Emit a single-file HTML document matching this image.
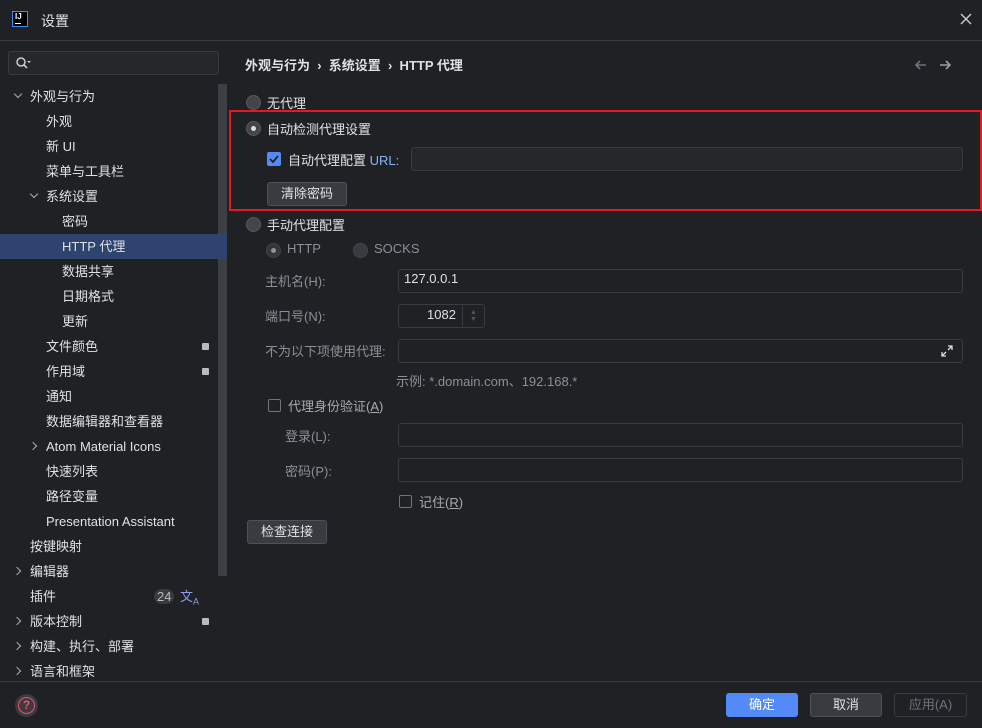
<!DOCTYPE html><html><head><meta charset="utf-8"><style>
*{margin:0;padding:0;box-sizing:border-box}
body{width:982px;height:728px;background:#1f2125;font-family:"Liberation Sans","Noto Sans CJK SC",sans-serif;font-size:13px;color:#dfe1e5;position:relative;overflow:hidden}
.a{position:absolute;white-space:nowrap}
.row{position:absolute;left:0;width:227px;height:25px;line-height:25px}
.sel{background:#2e436e}
.chev{position:absolute;width:6px;height:6px;border-right:1.5px solid #aaa;border-bottom:1.5px solid #aaa}
.radio{position:absolute;width:15px;height:15px;border-radius:50%;background:#43454a;border:1px solid #55585e}
.radio.on::after{content:"";position:absolute;left:4px;top:4px;width:5px;height:5px;border-radius:50%;background:#ddd}
.inp{position:absolute;border:1px solid #393b40;background:#1f2125;border-radius:3px}
.btn{position:absolute;border:1px solid #4e5157;background:#393b40;border-radius:3px;text-align:center;color:#dfe1e5}
.cb{position:absolute;width:13px;height:13px;border:1px solid #6f737a;border-radius:2px}
.dim{color:#8c8f95}
.bdg{position:absolute;width:7px;height:7px;background:#bbb;border-radius:1px}
</style></head><body>
<div class="a" style="left:0;top:40px;width:982px;height:1px;background:#393b40"></div>
<div class="a" style="left:12px;top:11px;width:16px;height:16px;background:#000;border:1px solid #3d8ef2;color:#fff;font-size:8px;font-weight:bold;line-height:10px;padding-left:2px">IJ<div style="width:6px;height:1px;background:#fff;margin-top:1px"></div></div>
<div class="a" style="left:41px;top:11px;font-size:14px">设置</div>
<svg class="a" style="left:960px;top:13px" width="12" height="12"><path d="M1 1l10 10M11 1L1 11" stroke="#ccc" stroke-width="1.4"/></svg>
<!-- search -->
<div class="a" style="left:8px;top:51px;width:211px;height:24px;border:1px solid #393b40;border-radius:3px;background:#25272b"></div>
<svg class="a" style="left:15px;top:56px" width="16" height="14"><circle cx="6" cy="6" r="4" fill="none" stroke="#ccc" stroke-width="1.5"/><path d="M9 9l3 3" stroke="#ccc" stroke-width="1.6"/><path d="M12 5h4l-2 2z" fill="#ccc"/></svg>
<!-- scrollbar -->
<div class="a" style="left:218px;top:84px;width:9px;height:492px;background:#3c3f44"></div>
<div class="row" style="top:84px"><span class="chev" style="left:15px;top:7px;transform:rotate(45deg)"></span><span class="a" style="left:30px">外观与行为</span></div>
<div class="row" style="top:109px"><span class="a" style="left:46px">外观</span></div>
<div class="row" style="top:134px"><span class="a" style="left:46px">新 UI</span></div>
<div class="row" style="top:159px"><span class="a" style="left:46px">菜单与工具栏</span></div>
<div class="row" style="top:184px"><span class="chev" style="left:31px;top:7px;transform:rotate(45deg)"></span><span class="a" style="left:46px">系统设置</span></div>
<div class="row" style="top:209px"><span class="a" style="left:62px">密码</span></div>
<div class="row sel" style="top:234px"><span class="a" style="left:62px">HTTP 代理</span></div>
<div class="row" style="top:259px"><span class="a" style="left:62px">数据共享</span></div>
<div class="row" style="top:284px"><span class="a" style="left:62px">日期格式</span></div>
<div class="row" style="top:309px"><span class="a" style="left:62px">更新</span></div>
<div class="row" style="top:334px"><span class="a" style="left:46px">文件颜色</span><span class="bdg" style="left:202px;top:9px"></span></div>
<div class="row" style="top:359px"><span class="a" style="left:46px">作用域</span><span class="bdg" style="left:202px;top:9px"></span></div>
<div class="row" style="top:384px"><span class="a" style="left:46px">通知</span></div>
<div class="row" style="top:409px"><span class="a" style="left:46px">数据编辑器和查看器</span></div>
<div class="row" style="top:434px"><span class="chev" style="left:30px;top:9px;transform:rotate(-45deg)"></span><span class="a" style="left:46px">Atom Material Icons</span></div>
<div class="row" style="top:459px"><span class="a" style="left:46px">快速列表</span></div>
<div class="row" style="top:484px"><span class="a" style="left:46px">路径变量</span></div>
<div class="row" style="top:509px"><span class="a" style="left:46px">Presentation Assistant</span></div>
<div class="row" style="top:534px"><span class="a" style="left:30px">按键映射</span></div>
<div class="row" style="top:559px"><span class="chev" style="left:14px;top:9px;transform:rotate(-45deg)"></span><span class="a" style="left:30px">编辑器</span></div>
<div class="row" style="top:584px"><span class="a" style="left:30px">插件</span><span class="a" style="left:154px;top:5px;height:15px;line-height:15px;padding:0 3px;border-radius:8px;background:#393b40;color:#bbb">24</span><span class="a" style="left:180px;color:#8a9ee8;font-size:13px">文<sub style="font-size:9px">A</sub></span></div>
<div class="row" style="top:609px"><span class="chev" style="left:14px;top:9px;transform:rotate(-45deg)"></span><span class="a" style="left:30px">版本控制</span><span class="bdg" style="left:202px;top:9px"></span></div>
<div class="row" style="top:634px"><span class="chev" style="left:14px;top:9px;transform:rotate(-45deg)"></span><span class="a" style="left:30px">构建、执行、部署</span></div>
<div class="row" style="top:659px"><span class="chev" style="left:14px;top:9px;transform:rotate(-45deg)"></span><span class="a" style="left:30px">语言和框架</span></div>
<!-- footer -->
<div class="a" style="left:0;top:681px;width:982px;height:1px;background:#393b40"></div>
<div class="a" style="left:15px;top:694px;width:23px;height:23px;border-radius:50%;background:#393b40"></div>
<div class="a" style="left:18px;top:697px;width:17px;height:17px;border-radius:50%;border:1.5px solid #e5566b;color:#e5566b;font-size:12px;text-align:center;line-height:14px;font-weight:bold">?</div>
<div class="btn" style="left:726px;top:693px;width:72px;height:24px;line-height:22px;background:#548af7;border-color:#548af7;color:#fff">确定</div>
<div class="btn" style="left:810px;top:693px;width:72px;height:24px;line-height:22px">取消</div>
<div class="btn" style="left:894px;top:693px;width:73px;height:24px;line-height:22px;background:#1f2125;border-color:#393b40;color:#6f737a">应用(A)</div>
<!-- content -->
<div class="a" style="left:245px;top:55px;font-size:13px;font-weight:bold;color:#dfe1e5">外观与行为 &nbsp;›&nbsp; 系统设置 &nbsp;›&nbsp; HTTP 代理</div>
<svg class="a" style="left:914px;top:59px" width="40" height="12"><path d="M12 6H2M6 2L2 6l4 4" fill="none" stroke="#6f737a" stroke-width="1.6"/><path d="M26 6h10M32 2l4 4-4 4" fill="none" stroke="#9a9da3" stroke-width="1.6"/></svg>
<div class="radio" style="left:246px;top:95px"></div><div class="a" style="left:267px;top:93px">无代理</div>
<div class="a" style="left:229px;top:110px;width:753px;height:101px;border:2px solid #e01b22"></div>
<div class="radio on" style="left:246px;top:121px"></div><div class="a" style="left:267px;top:119px">自动检测代理设置</div>
<div class="a" style="left:267px;top:152px;width:14px;height:14px;background:#548af7;border-radius:2px"></div>
<svg class="a" style="left:268px;top:153px" width="12" height="12"><path d="M2 6l3 3 5-6" fill="none" stroke="#1f2125" stroke-width="1.8"/></svg>
<div class="a" style="left:288px;top:150px">自动代理配置 <span style="color:#8ab4f8">URL:</span></div>
<div class="inp" style="left:411px;top:147px;width:552px;height:24px;background:#25272b"></div>
<div class="btn" style="left:267px;top:182px;width:80px;height:24px;line-height:22px">清除密码</div>
<div class="radio" style="left:246px;top:217px"></div><div class="a" style="left:267px;top:215px">手动代理配置</div>
<div class="radio on" style="left:266px;top:243px;opacity:.6"></div><div class="a dim" style="left:287px;top:241px">HTTP</div>
<div class="radio" style="left:353px;top:243px;opacity:.7"></div><div class="a dim" style="left:374px;top:241px">SOCKS</div>
<div class="a dim" style="left:265px;top:271px">主机名(H):</div>
<div class="inp" style="left:398px;top:269px;width:565px;height:24px"></div><div class="a" style="left:404px;top:271px">127.0.0.1</div>
<div class="a dim" style="left:265px;top:306px">端口号(N):</div>
<div class="inp" style="left:398px;top:304px;width:87px;height:24px"></div><div class="a" style="left:462px;top:305px;width:1px;height:22px;background:#393b40"></div>
<div class="a" style="left:427px;top:307px;color:#dfe1e5">1082</div>
<div class="a" style="left:470px;top:309px;font-size:7px;color:#555;line-height:7px">▲<br>▼</div>
<div class="a dim" style="left:265px;top:341px">不为以下项使用代理:</div>
<div class="inp" style="left:398px;top:339px;width:565px;height:24px"></div>
<svg class="a" style="left:941px;top:345px" width="12" height="12"><path d="M7 1h4v4M11 1L7 5M5 11H1V7M1 11l4-4" fill="none" stroke="#ddd" stroke-width="1.3"/></svg>
<div class="a dim" style="left:396px;top:371px">示例: *.domain.com、192.168.*</div>
<div class="cb" style="left:268px;top:399px"></div><div class="a dim" style="left:288px;top:396px;color:#aaa">代理身份验证(<u>A</u>)</div>
<div class="a dim" style="left:285px;top:426px">登录(L):</div>
<div class="inp" style="left:398px;top:423px;width:565px;height:24px"></div>
<div class="a dim" style="left:285px;top:461px">密码(P):</div>
<div class="inp" style="left:398px;top:458px;width:565px;height:24px"></div>
<div class="cb" style="left:399px;top:495px"></div><div class="a" style="left:419px;top:492px;color:#aaa">记住(<u>R</u>)</div>
<div class="btn" style="left:247px;top:520px;width:80px;height:24px;line-height:22px">检查连接</div>
</body></html>
